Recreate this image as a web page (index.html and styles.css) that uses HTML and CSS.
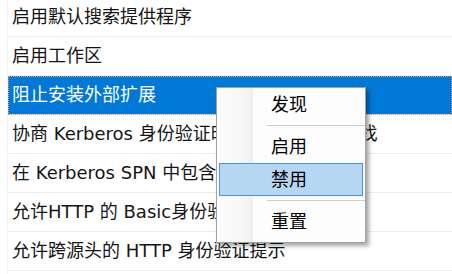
FILE: index.html
```html
<!DOCTYPE html>
<html lang="zh-CN">
  <head>
    <meta charset="UTF-8" />
    <title>策略列表</title>
    <link rel="stylesheet" href="styles.css">
  </head>
  <body>
    <div class="list">
      <div class="row">启用默认搜索提供程序</div>
      <div class="row">启用工作区</div>
      <div class="row selected">阻止安装外部扩展</div>
      <div class="row">协商 Kerberos 身份验证时禁用 CNAME 查找</div>
      <div class="row">在 Kerberos SPN 中包含非标准端口</div>
      <div class="row">允许HTTP 的 Basic身份验证</div>
      <div class="row">允许跨源头的 HTTP 身份验证提示</div>
      <div class="row"></div>
    </div>
    <div class="menu">
      <div class="item">发现</div>
      <div class="sep"></div>
      <div class="item">启用</div>
      <div class="item hover">禁用</div>
      <div class="sep"></div>
      <div class="item">重置</div>
    </div>
  </body>
</html>
```

FILE: styles.css
```css
html,
body {
  height: 274px;
  overflow: hidden;
}
body {
  margin: 0;
  background-color: white;
  font-family: "DejaVu Sans", "Noto Sans CJK SC", sans-serif;
  font-size: 18px;
  color: hsl(0, 0%, 8%);
}
.list {
  margin-top: -2px;
  margin-left: 7px;
  border-left: 1px solid hsl(0, 0%, 94%);
}
.row {
  height: 38px;
  line-height: 38px;
  padding-left: 4px;
  border-bottom: 1px solid hsl(0, 0%, 93%);
  white-space: nowrap;
}
.row.selected {
  background-color: #0078d7;
  color: white;
  outline: 1px dotted #f0a050;
  outline-offset: -1px;
}
.menu {
  position: absolute;
  left: 216px;
  top: 87px;
  width: 148px;
  padding: 0 0 4px;
  border: 1px solid hsl(0, 0%, 63%);
  background: linear-gradient(to right, #fcfcfc 0, #f6f6f6 28px, #eeeeee 36px, #fdfdfd 36px);
  box-shadow: 3px 3px 4px rgba(0, 0, 0, 0.35);
}
.item {
  height: 31px;
  line-height: 31px;
  margin: 0 2px;
  padding-left: 51px;
  border: 1px solid transparent;
  color: black;
}
.item.hover {
  background-color: #b6d7f4;
  border-color: #4595e2;
}
.sep {
  height: 9px;
  margin-left: 50px;
  background: linear-gradient(#0000 4px, hsl(0, 0%, 80%) 4px, hsl(0, 0%, 80%) 5px, #0000 5px);
}
```
